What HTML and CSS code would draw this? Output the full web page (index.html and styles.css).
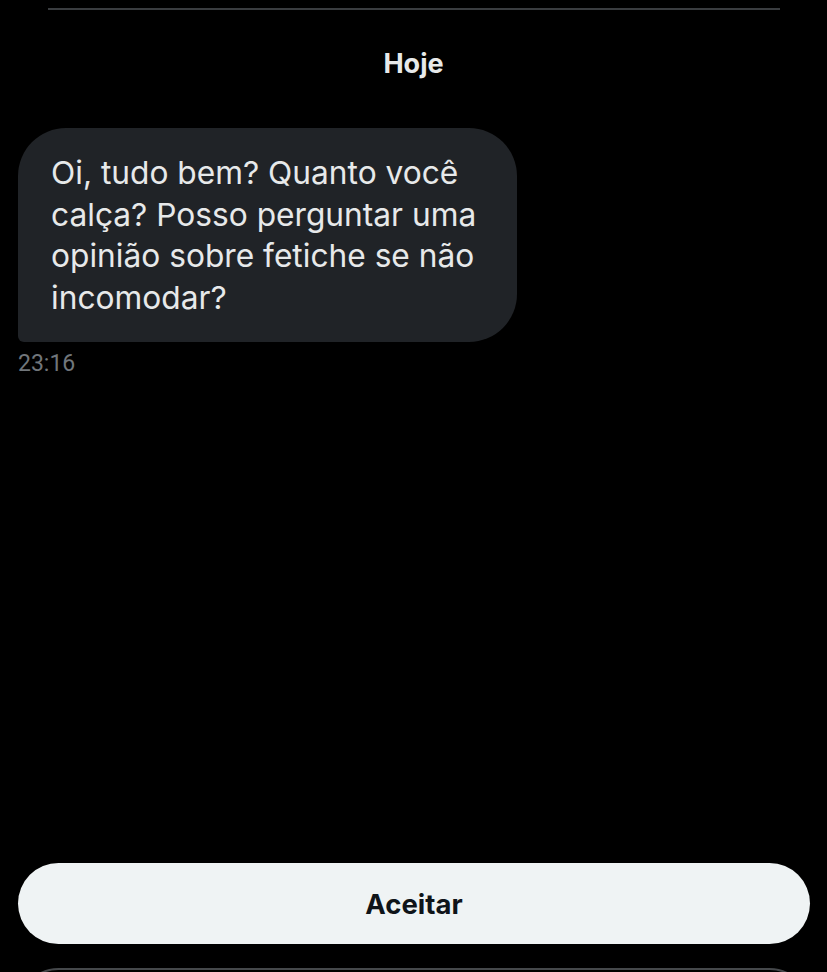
FILE: index.html
```html
<!DOCTYPE html>
<html lang="pt">
<head>
<meta charset="utf-8">
<title>Mensagem</title>
<link rel="stylesheet" href="styles.css">
</head>
<body>
<div class="page">
  <div class="divider"></div>
  <div class="day">Hoje</div>
  <div class="message">
    <div class="bubble">Oi, tudo bem? Quanto você calça? Posso perguntar uma opinião sobre fetiche se não incomodar?</div>
    <div class="time">23:16</div>
  </div>
  <div class="actions">
    <button class="btn btn-primary">Aceitar</button>
    <button class="btn btn-outline" aria-label="Excluir"></button>
  </div>
</div>
</body>
</html>
```
FILE: styles.css
```css
html, body {
  margin: 0;
  padding: 0;
  background: #000;
}
.page {
  height: 972px;
  display: flex;
  flex-direction: column;
  overflow: hidden;
  font-family: Inter, Roboto, "Liberation Sans", sans-serif;
  color: #e7e9ea;
}
.divider {
  margin: 8px 47px 0 48px;
  height: 2px;
  background: #3a3d40;
}
.day {
  margin-top: 38px;
  text-align: center;
  font-weight: 700;
  font-size: 27px;
  line-height: 32px;
  color: #e7e9ea;
}
.message {
  margin-top: 48px;
  padding-left: 18px;
  display: flex;
  flex-direction: column;
  align-items: flex-start;
}
.bubble {
  box-sizing: border-box;
  width: 499px;
  padding: 24px 20px 24px 33px;
  background: #202327;
  border-radius: 48px 48px 48px 6px;
  font-size: 31.7px;
  line-height: 41.5px;
  color: #e7e9ea;
}
.time {
  margin-top: 8px;
  font-family: Roboto, "Liberation Sans", sans-serif;
  font-size: 23px;
  line-height: 28px;
  color: #71767b;
}
.actions {
  margin-top: auto;
  height: 109px;
  overflow: hidden;
  display: flex;
  flex-direction: column;
  gap: 24px;
  padding: 0 17px 0 18px;
  flex-shrink: 0;
}
.btn {
  flex-shrink: 0;
  box-sizing: border-box;
  height: 81px;
  width: 100%;
  border-radius: 41px;
  font-family: Inter, Roboto, "Liberation Sans", sans-serif;
  font-weight: 700;
  font-size: 27.5px;
  padding: 0;
}
.btn-primary {
  background: #eff3f4;
  color: #0f1419;
  border: none;
}
.btn-outline {
  background: transparent;
  border: 2px solid #45484b;
}
```
